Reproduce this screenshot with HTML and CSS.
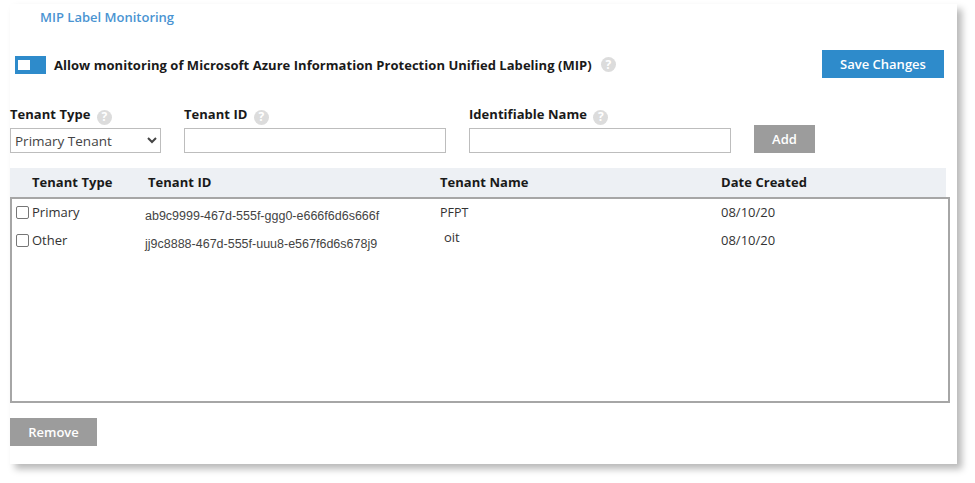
FILE: index.html
```html
<!DOCTYPE html>
<html lang="en">
<head>
<meta charset="utf-8">
<title>MIP Label Monitoring</title>
<link rel="stylesheet" href="styles.css">
</head>
<body>
<main class="card">
  <h1 class="title">MIP Label Monitoring</h1>
  <div class="allow-row">
    <span class="toggle"><span class="knob"></span></span>
    <span class="allow-label">Allow monitoring of Microsoft Azure Information Protection Unified Labeling (MIP)</span>
    <span class="help">?</span>
    <button class="btn btn-save" type="button">Save Changes</button>
  </div>
  <div class="form-row">
    <div class="field field-type">
      <div class="label">Tenant Type <span class="help">?</span></div>
      <select class="control select"><option>Primary Tenant</option></select>
    </div>
    <div class="field field-text">
      <div class="label">Tenant ID <span class="help">?</span></div>
      <input class="control" type="text">
    </div>
    <div class="field field-text">
      <div class="label">Identifiable Name <span class="help">?</span></div>
      <input class="control" type="text">
    </div>
    <button class="btn btn-grey btn-add" type="button">Add</button>
  </div>
  <div class="table-head">
    <span class="col-type">Tenant Type</span>
    <span class="col-id">Tenant ID</span>
    <span class="col-name">Tenant Name</span>
    <span class="col-date">Date Created</span>
  </div>
  <div class="table-box">
    <div class="row">
      <label class="cell-type"><span class="check"></span>Primary</label>
      <span class="cell-id">ab9c9999-467d-555f-ggg0-e666f6d6s666f</span>
      <span class="cell-name">PFPT</span>
      <span class="cell-date">08/10/20</span>
    </div>
    <div class="row">
      <label class="cell-type"><span class="check"></span>Other</label>
      <span class="cell-id">jj9c8888-467d-555f-uuu8-e567f6d6s678j9</span>
      <span class="cell-name cell-name-raised">oit</span>
      <span class="cell-date">08/10/20</span>
    </div>
  </div>
  <button class="btn btn-grey btn-remove" type="button">Remove</button>
</main>
</body>
</html>
```
FILE: styles.css
```css
* { box-sizing: border-box; }
html, body { margin: 0; padding: 0; background: #fff; }
body {
  width: 975px;
  height: 483px;
  padding: 4px 0 0 10px;
  overflow: hidden;
  font-family: "Open Sans", "Liberation Sans", sans-serif;
  font-size: 13px;
  color: #333;
}
.card {
  width: 947px;
  height: 460px;
  padding-top: 4px;
  background: #fff;
  box-shadow: 5px 5px 7px rgba(0, 0, 0, 0.28);
}
.title {
  margin: 0 0 0 30px;
  font-size: 13px;
  line-height: 18px;
  font-weight: 600;
  color: #4a94d2;
}
.allow-row {
  display: flex;
  align-items: center;
  height: 28px;
  margin-top: 24px;
  padding-left: 5px;
}
.toggle {
  display: block;
  width: 31px;
  height: 18px;
  margin-top: 2px;
  padding: 4px 0 0 3px;
  background: #2e8bcb;
}
.knob { display: block; width: 12px; height: 10px; background: #fff; }
.allow-label {
  margin: 2px 0 0 8px;
  font-size: 13px;
  font-weight: 700;
  letter-spacing: 0.04px;
  color: #1a1a1a;
  white-space: nowrap;
}
.help {
  display: inline-flex;
  align-items: center;
  justify-content: center;
  width: 15px;
  height: 15px;
  border-radius: 50%;
  background: #dcdcdc;
  color: #fff;
  font-size: 12px;
  font-weight: 700;
  line-height: 1;
  vertical-align: -2px;
}
.allow-row .help { margin: 1px 0 0 9px; }
.btn {
  border: 0;
  padding: 0;
  font-family: inherit;
  font-size: 13px;
  font-weight: 600;
  color: #fff;
}
.btn-save {
  width: 122px;
  height: 28px;
  margin-left: auto;
  margin-right: 13px;
  background: #2e8bcb;
}
.btn-grey { background: #9c9c9c; }
.form-row {
  display: flex;
  align-items: flex-end;
  margin-top: 25px;
}
.field { display: flex; flex-direction: column; }
.field-type { width: 151px; margin-right: 23px; }
.field-text { width: 262px; margin-right: 23px; }
.label {
  height: 25px;
  line-height: 22px;
  font-size: 13px;
  font-weight: 700;
  letter-spacing: 0.04px;
  color: #1a1a1a;
  white-space: nowrap;
}
.label .help { margin-left: 3px; }
.control {
  width: 100%;
  height: 25px;
  margin: 0;
  padding: 0 4px;
  border: 1px solid #bdbdbd;
  border-radius: 0;
  background: #fff;
  font-family: inherit;
  font-size: 13px;
  color: #444;
}
.select { padding: 0; font-size: 13.5px; }
.btn-add { width: 61px; height: 28px; }
.table-head {
  display: flex;
  align-items: center;
  width: 936px;
  height: 29px;
  margin-top: 15px;
  padding-bottom: 2px;
  background: #edf0f4;
  font-weight: 700;
  letter-spacing: 0.04px;
  color: #1a1a1a;
  white-space: nowrap;
}
.col-type { width: 138px; padding-left: 22px; }
.col-id { width: 292px; }
.col-name { width: 281px; }
.table-box {
  width: 940px;
  height: 206px;
  border: 2px solid #a6a6a6;
}
.row {
  display: flex;
  align-items: center;
  height: 28px;
  padding: 0 0 2px 4px;
}
.cell-type {
  display: flex;
  align-items: center;
  width: 129px;
  white-space: nowrap;
}
.check {
  width: 13px;
  height: 13px;
  margin-right: 3px;
  border: 1px solid #767676;
  border-radius: 2px;
  background: #fff;
}
.cell-id {
  width: 295px;
  padding-top: 8px;
  font-family: "Liberation Sans", Arial, sans-serif;
  font-size: 12.5px;
  color: #444;
  white-space: nowrap;
}
.cell-name { width: 281px; font-size: 12.5px; }
.cell-name-raised { padding: 0 0 6px 4px; font-size: 13px; }
.btn-remove {
  display: block;
  width: 87px;
  height: 28px;
  margin-top: 15px;
}
```
